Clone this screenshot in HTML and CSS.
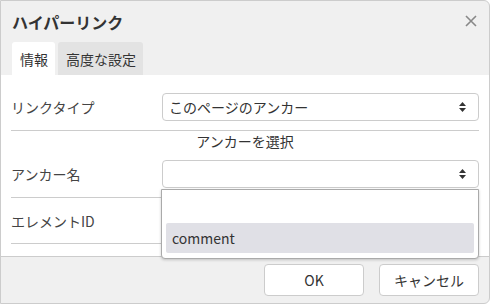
FILE: index.html
```html
<!DOCTYPE html>
<html lang="ja">
<head>
  <meta charset="UTF-8">
  <title>ハイパーリンク</title>
  <link rel="stylesheet" href="styles.css">
</head>
<body>
  <div class="dialog">
    <div class="dialog-head">
      <div class="title-bar">
        <h1>ハイパーリンク</h1>
        <svg class="close" width="12" height="12" viewBox="0 0 12 12"><path d="M1 1L11 11M11 1L1 11" stroke="#888" stroke-width="1.6"/></svg>
      </div>
      <div class="tabs">
        <div class="tab active">情報</div>
        <div class="tab">高度な設定</div>
      </div>
    </div>

    <div class="dialog-body">
      <div class="row">
        <label>リンクタイプ</label>
        <div class="select">
          <span>このページのアンカー</span>
          <svg class="arrows" width="7" height="10" viewBox="0 0 7 10"><path d="M3.5 0L7 4H0z M3.5 10L7 6H0z" fill="#333"/></svg>
        </div>
      </div>
      <div class="caption">アンカーを選択</div>
      <div class="row">
        <label>アンカー名</label>
        <div class="select">
          <span></span>
          <svg class="arrows" width="7" height="10" viewBox="0 0 7 10"><path d="M3.5 0L7 4H0z M3.5 10L7 6H0z" fill="#333"/></svg>
        </div>
      </div>
      <div class="row">
        <label>エレメントID</label>
        <div class="input"></div>
      </div>

      <ul class="dropdown">
        <li></li>
        <li class="hover">comment</li>
      </ul>
    </div>

    <div class="dialog-foot">
      <button class="btn">OK</button>
      <button class="btn">キャンセル</button>
    </div>
  </div>
</body>
</html>
```

FILE: styles.css
```css
* {
  box-sizing: border-box;
}
body {
  margin: 0;
  font-family: "Noto Sans CJK JP", "Noto Sans", sans-serif;
  font-size: 14px;
  color: #333;
  background: #fff;
}
.dialog {
  width: 490px;
  height: 304px;
  border: 1px solid #ccc;
  border-radius: 0 6px 6px 0;
  background: #f0f0f0;
  display: flex;
  flex-direction: column;
  overflow: hidden;
}
.dialog-head {
  height: 74px;
  padding: 0 11px 0 11px;
  display: flex;
  flex-direction: column;
}
.title-bar {
  height: 41px;
  display: flex;
  align-items: center;
  justify-content: space-between;
}
h1 {
  margin: 0;
  font-size: 16px;
  font-weight: bold;
  color: #333;
  line-height: 20px;
}
.close {
  margin-right: 1px;
  margin-top: -2px;
}
.tabs {
  display: flex;
  gap: 3px;
  flex: 1;
}
.tab {
  padding: 0 7px 0 8px;
  background: #e3e3e3;
  border-radius: 3px 3px 0 0;
  display: flex;
  align-items: center;
  color: #333;
}
.tab.active {
  background: #fff;
}
.dialog-body {
  position: relative;
  background: #fff;
  padding: 18px 10px 0 10px;
  height: 181px;
}
.row {
  display: flex;
  align-items: center;
  border-bottom: 1px solid #ccc;
  padding-bottom: 9px;
}
.row + .row {
  padding: 9px 0;
}
.row:last-of-type {
  height: 46px;
}
label {
  width: 151px;
  color: #444;
}
.select {
  flex: 1;
  height: 28px;
  border: 1px solid #ccc;
  border-radius: 4px;
  display: flex;
  align-items: center;
  justify-content: space-between;
  padding: 0 12px 0 6px;
  color: #333;
}
.input {
  flex: 1;
  height: 28px;
}
.caption {
  text-align: center;
  height: 29px;
  line-height: 20px;
  color: #333;
}
.dropdown {
  position: absolute;
  top: 114px;
  left: 160px;
  width: 318px;
  height: 70px;
  margin: 0;
  padding: 3px 4px 4px 4px;
  list-style: none;
  background: #fff;
  border: 1px solid #aaa;
  border-radius: 0 0 4px 4px;
  box-shadow: 0 1px 3px rgba(0,0,0,0.2);
}
.dropdown li {
  height: 30px;
  line-height: 30px;
  padding: 0 6px;
  color: #333;
}
.dropdown li.hover {
  background: #e0e0e6;
  border-radius: 2px;
}
.dialog-foot {
  flex: 1;
  border-top: 1px solid #ccc;
  display: flex;
  justify-content: flex-end;
  align-items: flex-start;
  gap: 15px;
  padding: 7px 10px 0 0;
}
.btn {
  width: 100px;
  height: 32px;
  background: #fff;
  border: 1px solid #ccc;
  border-radius: 4px;
  font-family: inherit;
  font-size: 14px;
  color: #333;
}
```
